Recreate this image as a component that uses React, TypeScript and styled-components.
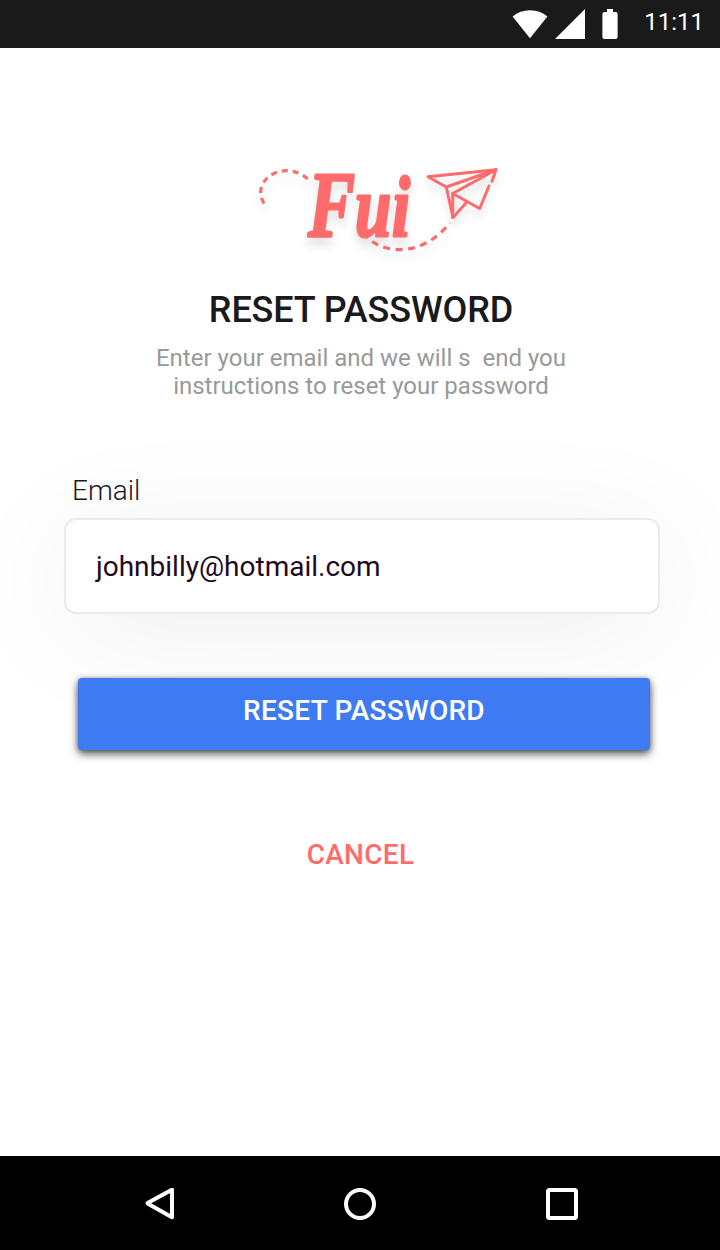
import React from "react";
import styled, { createGlobalStyle } from "styled-components";

const CORAL = "#ff6b6b";

const GlobalStyle = createGlobalStyle`
  *, *::before, *::after { box-sizing: border-box; }
  html, body { margin: 0; padding: 0; background: #fff; }
  body { font-family: Roboto, "Liberation Sans", sans-serif; }
`;

const Screen = styled.div`
  display: flex;
  flex-direction: column;
  width: 720px;
  height: 1250px;
  overflow: hidden;
  background: #fff;
`;

const StatusBar = styled.header`
  display: flex;
  flex: none;
  align-items: flex-start;
  justify-content: flex-end;
  height: 48px;
  padding: 8px 16px 0 0;
  background: #1a1a1a;
  color: #fff;
`;

const StatusIcons = styled.svg`
  display: block;
  width: 106px;
  height: 32px;
  margin-right: 26px;
  fill: #fff;
`;

const Clock = styled.time`
  font-size: 24px;
  line-height: 28px;
`;

const Content = styled.main`
  display: flex;
  flex: 1;
  flex-direction: column;
  align-items: center;
  padding-top: 112px;
`;

const Logo = styled.svg`
  display: block;
  width: 260px;
  height: 110px;
  margin-left: 40px;
  overflow: visible;
  filter: drop-shadow(0 8px 4px rgba(0, 0, 0, 0.1));
`;

const Wordmark = styled.text`
  font-family: "Liberation Serif", serif;
  font-size: 94px;
  font-weight: 700;
  font-style: italic;
  fill: ${CORAL};
  stroke: ${CORAL};
  stroke-width: 3px;
  stroke-linejoin: round;
`;

const WordmarkTail = styled.tspan`
  font-size: 87px;
  letter-spacing: 1px;
`;

const Title = styled.h1`
  margin: 19px 0 0 2px;
  font-size: 36px;
  font-weight: 500;
  line-height: 42px;
  letter-spacing: -0.12px;
  color: #1a1a1a;
`;

const Description = styled.p`
  margin: 13px 0 0 2px;
  font-size: 24px;
  line-height: 28px;
  text-align: center;
  white-space: pre;
  color: #999;
`;

const Form = styled.form`
  display: flex;
  flex-direction: column;
  width: 596px;
  margin: 74px 0 0 4px;
`;

const Label = styled.label`
  position: relative;
  z-index: 1;
  margin-left: 8px;
  font-size: 28px;
  font-weight: 300;
  line-height: 33px;
  color: #1a1a1a;
`;

const Field = styled.div`
  display: flex;
  align-items: center;
  height: 96px;
  margin-top: 11px;
  padding: 0 30px;
  border: 2px solid #ebebeb;
  border-radius: 12px;
  background: #fff;
  box-shadow: 0 16px 120px rgba(0, 0, 0, 0.07);
  font-size: 28px;
  line-height: 33px;
  color: #1f0820;
`;

const SubmitButton = styled.button`
  height: 72px;
  margin: 64px 10px 0 14px;
  padding: 0 0 7px;
  border: 0;
  border-radius: 4px;
  background: #3e7bf2;
  box-shadow: 0 4px 8px rgba(0, 0, 0, 0.65), 0 0 4px rgba(0, 0, 0, 0.25);
  font: 500 28px/33px Roboto, sans-serif;
  letter-spacing: 0.28px;
  color: #fff;
`;

const CancelButton = styled.button`
  margin: 88px 0 0 1px;
  padding: 0;
  border: 0;
  background: none;
  font: 500 28px/33px Roboto, sans-serif;
  letter-spacing: 0.28px;
  color: ${CORAL};
`;

const NavBar = styled.nav`
  display: flex;
  flex: none;
  align-items: center;
  justify-content: space-between;
  height: 94px;
  padding: 2px 142px 0;
  background: #000;
`;

const NavIcon = styled.svg`
  display: block;
  width: 32px;
  height: 32px;
  fill: none;
  stroke: #fff;
  stroke-width: 4px;
  stroke-linejoin: round;
`;

export default function App() {
  return (
    <Screen>
      <GlobalStyle />
      <StatusBar>
        <StatusIcons viewBox="512 8 106 32" aria-hidden="true">
          <path d="M512.6 16.6Q520 10.2 530 10.2T547.4 16.6L530 38.2Z" />
          <path d="M555 39H585V9Z" />
          <path d="M607 9h6v3h2.6q2 0 2 2v23q0 2-2 2h-11.2q-2 0-2-2v-23q0-2 2-2h2.6z" />
        </StatusIcons>
        <Clock>11:11</Clock>
      </StatusBar>

      <Content>
        <Logo viewBox="250 160 260 110" role="img" aria-label="Fui">
          <g fill="none" stroke={CORAL} strokeWidth="3.2">
            <path d="M264 203.500Q259 195 261.500 187C265 176 277 170.500 287 170.700C297 171 304 175 310 181" strokeDasharray="6 5" />
            <path d="M363 233C374 247 391 250.500 405 249.500C425 247 439 236 450 223" strokeDasharray="7 5.500" />
            <g strokeLinejoin="round" strokeLinecap="round" strokeWidth="3">
              <path d="M492 181.300L496 169.700L428 176.800L446.300 187L453 217.500L466.700 202.300" />
              <path d="M446.300 187L496 169.700L452.700 193.500V217.500" />
              <path d="M452.700 193.500L479.700 208.500L489 186" />
            </g>
          </g>
          <Wordmark transform="translate(308 235.500) scale(.75 1)">
            F<WordmarkTail>ui</WordmarkTail>
          </Wordmark>
        </Logo>
        <Title>RESET PASSWORD</Title>
        <Description>{"Enter your email and we will s  end you\ninstructions to reset your password"}</Description>

        <Form>
          <Label>Email</Label>
          <Field>johnbilly@hotmail.com</Field>
          <SubmitButton type="button">RESET PASSWORD</SubmitButton>
        </Form>
        <CancelButton type="button">CANCEL</CancelButton>
      </Content>

      <NavBar>
        <NavIcon viewBox="0 0.500 32 32" aria-label="Back">
          <path d="M28.500 2.500L4.500 15.500Q3.500 16 4.500 16.500L28.500 30Z" transform="translate(1.500 -.3)" />
        </NavIcon>
        <NavIcon viewBox="0 0 32 32" aria-label="Home">
          <circle cx="16" cy="16" r="14" />
        </NavIcon>
        <NavIcon viewBox="0 0 32 32" aria-label="Recent apps">
          <rect x="2" y="2" width="28" height="28" rx="1.500" />
        </NavIcon>
      </NavBar>
    </Screen>
  );
}
